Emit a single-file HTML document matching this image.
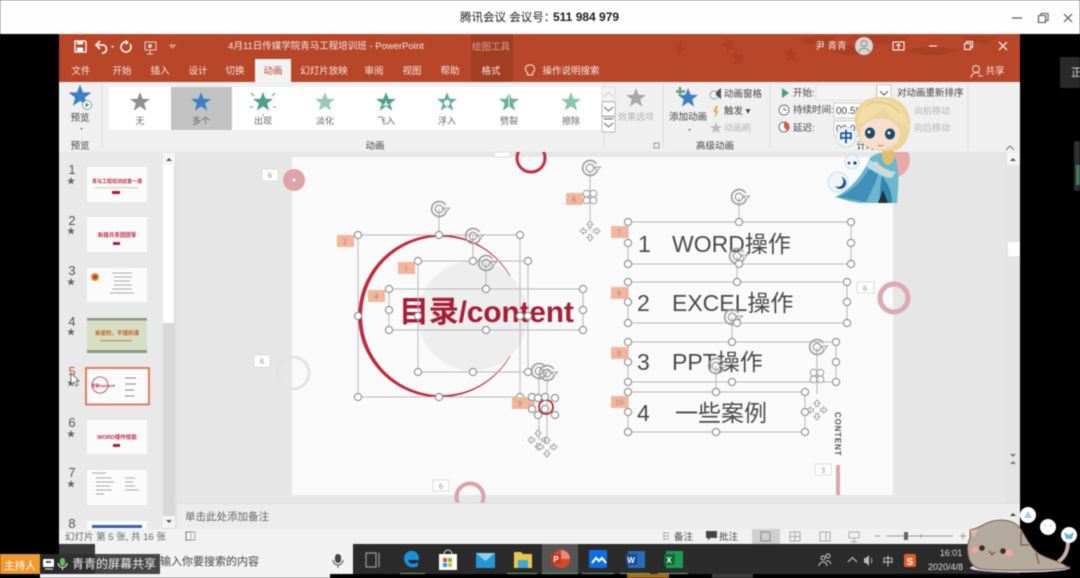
<!DOCTYPE html>
<html><head><meta charset="utf-8"><style>
html,body{margin:0;padding:0;background:#000;width:1080px;height:578px;overflow:hidden}
svg{display:block;filter:blur(.5px)}
text{font-family:"Liberation Sans","Noto Sans CJK SC",sans-serif}
.w{fill:#f6e6e0;font-size:9.5px;text-anchor:middle}
.l{fill:#666;font-size:9px;text-anchor:middle}
.d{fill:#444;font-size:9.5px}
.g{fill:#b5b5b5;font-size:9px}
.h{fill:#fff;stroke:#8d8d8d;stroke-width:1.1}
.b{fill:none;stroke:#b8b8b8;stroke-width:1}
.tag{fill:#f4b69a}
.tn{fill:#888;font-size:8px;text-anchor:middle;font-family:"Liberation Serif",serif}
.big{fill:#4a4a4a;font-size:23px}
</style></head><body>
<svg width="1080" height="578" viewBox="0 0 1080 578" xmlns="http://www.w3.org/2000/svg">
<defs>
<path id="s" d="M0-10 2.6-3.2 10-3 4.2 1.4 6.2 8.6 0 4.4-6.2 8.6-4.2 1.4-10-3-2.6-3.2Z"/>
<circle id="c" r="3.6" class="h"/>
<g id="rot" fill="none" stroke="#a0a0a0"><path d="M6.500-4A7.500 7.500 0 1 0 7 3" stroke-width="1.700"/><circle r="3.800" stroke-width="1.300"/><path d="M4-1 10.500-1 7.300 2.500Z" fill="#fff" stroke-width="1"/></g>
<g id="mv" fill="#fff" stroke="#a5a5a5" stroke-width="1"><path d="M0-10 3-6.500H1.300V-3.500H-1.300V-6.500H-3Z"/><path d="M0 10 3 6.500H1.300V3.500H-1.300V6.500H-3Z"/><path d="M-10 0-6.500-3V-1.300H-3.500V1.300H-6.500V3Z"/><path d="M10 0 6.500-3V-1.300H3.500V1.300H6.500V3Z"/></g>
<g id="fl" fill="#fff" stroke="#999" stroke-width="1"><circle cx="-3.400" cy="-3.400" r="3.400"/><circle cx="3.400" cy="-3.400" r="3.400"/><circle cx="-3.400" cy="3.400" r="3.400"/><circle cx="3.400" cy="3.400" r="3.400"/></g>
<clipPath id="ca"><rect x="59" y="152" width="947" height="351"/></clipPath>
<clipPath id="th"><rect x="59" y="152" width="104" height="377"/></clipPath>
</defs>

<rect width="1080" height="578" fill="#000"/>
<rect width="1080" height="34" fill="#fdfdfd"/>
<text x="460" y="21" font-size="11.500" fill="#222">腾讯会议 会议号：</text>
<text x="553" y="21" font-size="12" font-weight="bold" fill="#222">511 984 979</text>
<path d="M1012 18H1022" stroke="#555" stroke-width="1.200"/>
<path d="M1038.500 15.500h7v7h-7zM1041 15.500v-2h7v7h-2" fill="none" stroke="#555" stroke-width="1.100"/>
<path d="M1064 14l8 8M1072 14l-8 8" stroke="#555" stroke-width="1.200"/>

<!-- title band -->
<rect x="59" y="34" width="961" height="48" fill="#B8472A"/>
<g fill="#aa4026"><path d="M676 46l5-5 1 6 4 3-5 1-2 5-2-5Z"/><path d="M725 36l5 6 4-2-2 6 5 4-7-1-3 5-1-7-6-2 7-2Z"/><path d="M732 56l5-6 2 5 5-1-3 5 2 5-5-2-4 3 1-5Z"/><path d="M783 50l6 1 2-5 2 6 5 1-4 3 2 6-5-3-5 3 2-6Z"/><path d="M800 40q20-6 36-3l-8 8q-16 2-28-5Z"/><path d="M830 50q24-8 50-4l-18 8q-18 4-32-4Z"/><path d="M850 36h60q-10 8-30 8-18 0-30-8Z"/><path d="M905 50q24-6 55 0l-20 5q-20 2-35-5Z"/><path d="M960 36h40l-16 8q-14-1-24-8Z"/></g>
<rect x="471" y="34" width="42" height="48" fill="#A23E22"/>
<text x="491" y="50" class="w" style="fill:#dba592">绘图工具</text>
<text x="326" y="49" class="w">4月11日传媒学院青马工程培训班  -  PowerPoint</text>
<!-- QAT -->
<path d="M75 41h10l1 1v10H75Z" fill="none" stroke="#fff" stroke-width="1.300"/><rect x="77" y="41" width="6" height="3.500" fill="#fff"/><rect x="77" y="47.500" width="6" height="4" fill="#fff"/>
<path d="M98 45h5a4 4 0 1 1-1 8" fill="none" stroke="#fff" stroke-width="1.600"/><path d="M100 41l-4 4 4 4" fill="none" stroke="#fff" stroke-width="1.600"/>
<path d="M111 46l3 0-1.500 2Z" fill="#fff"/>
<path d="M126 42a5 5 0 1 0 4 2" fill="none" stroke="#fff" stroke-width="1.500"/><path d="M125 40l4 2-3 3Z" fill="#fff"/>
<rect x="145" y="42" width="11" height="8" fill="none" stroke="#e8cfc6"/><path d="M150 50v4M147 54h6" stroke="#e8cfc6"/><circle cx="150" cy="46" r="2" fill="#e8cfc6"/>
<path d="M170 45h5l-2.500 3Z" fill="none" stroke="#e8b8a8"/>
<!-- title right -->
<text x="831" y="49" class="w">尹 青青</text>
<circle cx="864" cy="46" r="9" fill="#d9d5d2"/><circle cx="864" cy="43.500" r="3" fill="none" stroke="#888"/><path d="M858.500 52a6 6 0 0 1 11 0" fill="none" stroke="#888"/>
<rect x="893" y="42" width="11" height="8" fill="none" stroke="#fff"/><path d="M898.500 44v5M896.500 46l2-2 2 2" fill="none" stroke="#fff"/>
<path d="M929 46h8" stroke="#fff"/><path d="M964.500 43.500h6v6h-6zM966.500 43.500v-2h6v6h-2" fill="none" stroke="#fff"/><path d="M999 42l8 8M1007 42l-8 8" stroke="#fff" stroke-width="1.200"/>
<!-- tabs -->
<rect x="255" y="59" width="36" height="23" fill="#f2f2f2"/>
<text x="81" y="74" class="w">文件</text><text x="122" y="74" class="w">开始</text><text x="160" y="74" class="w">插入</text><text x="198" y="74" class="w">设计</text><text x="235" y="74" class="w">切换</text>
<text x="273" y="74" class="w" style="fill:#b8492f">动画</text>
<text x="324" y="74" class="w">幻灯片放映</text><text x="374" y="74" class="w">审阅</text><text x="412" y="74" class="w">视图</text><text x="450" y="74" class="w">帮助</text><text x="491" y="74" class="w">格式</text>
<path d="M530 66a4 4 0 0 1 2.500 7.500v2.500h-5v-2.500a4 4 0 0 1 2.500-7.500Z" fill="none" stroke="#f3dcd4" stroke-width="1.100" transform="translate(0 -1)"/>
<text x="571" y="74" class="w">操作说明搜索</text>
<circle cx="976" cy="69" r="3.500" fill="none" stroke="#f3dcd4"/><path d="M971 78a5.500 5.500 0 0 1 9-4M978 76h5" fill="none" stroke="#f3dcd4"/>
<text x="995" y="74" class="w">共享</text>

<!-- ribbon -->
<rect x="59" y="82" width="961" height="70" fill="#f0f0f0"/>
<rect x="109" y="87" width="493" height="43" fill="#fff"/>
<rect x="171" y="87" width="61" height="43" fill="#c2c2c2"/>
<path d="M102 84V148M663 84V148M770 84V148M968 84V148M604 84V148" stroke="#dcdcdc"/>
<use href="#s" transform="translate(80 96) scale(1.150)" fill="#3f7fc4"/>
<circle cx="87" cy="105" r="4.500" fill="#fff" stroke="#7aa391"/><path d="M85.500 102.500l4 2.500-4 2.500Z" fill="#5a9a80"/>
<text x="80" y="121" class="d" text-anchor="middle">预览</text><path d="M80 128h3l-1.500 2Z" fill="#777"/>
<text x="80" y="149" class="d" text-anchor="middle">预览</text>
<use href="#s" transform="translate(140 102)" fill="#8f8f8f"/><text x="140" y="124" class="l">无</text>
<use href="#s" transform="translate(201 102)" fill="#3f7fc4"/><text x="201" y="124" class="l">多个</text>
<use href="#s" transform="translate(263 102)" fill="#4fa088"/><path d="M251 93l3 3M275 93l-3 3M250 107h3M276 107h-3M263 114v2" stroke="#4fa088"/><text x="263" y="124" class="l">出现</text>
<use href="#s" transform="translate(325 102)" fill="#98c9b8"/><text x="325" y="124" class="l">淡化</text>
<use href="#s" transform="translate(386 102)" fill="#4fa088"/><path d="M386 101v8M383 106l3-3 3 3" stroke="#fff" fill="none"/><text x="386" y="124" class="l">飞入</text>
<use href="#s" transform="translate(447 102)" fill="#5fae98"/><circle cx="447" cy="103" r="3" fill="#fff"/><text x="447" y="124" class="l">浮入</text>
<use href="#s" transform="translate(509 102)" fill="#68ae98"/><path d="M509 92v18" stroke="#fff"/><text x="509" y="124" class="l">劈裂</text>
<use href="#s" transform="translate(571 102)" fill="#8cc5ae"/><text x="571" y="124" class="l">擦除</text>
<rect x="602" y="87" width="13" height="14" fill="#f4f4f4" stroke="#ddd"/><path d="M604 97l4.500-5 4.500 5" fill="none" stroke="#ccc"/>
<rect x="602" y="102" width="13" height="14" fill="#fff" stroke="#bbb"/><path d="M604 107l4.500 4 4.500-4" fill="none" stroke="#666"/>
<rect x="602" y="117" width="13" height="15" fill="#fff" stroke="#bbb"/><path d="M604 119h9M604 123l4.500 4 4.500-4" fill="none" stroke="#666"/>
<text x="375" y="149" class="d" text-anchor="middle">动画</text>
<use href="#s" transform="translate(636 98)" fill="#a8a8a8"/><text x="636" y="120" class="g" text-anchor="middle">效果选项</text>
<path d="M654 143h5v5h-5z" fill="none" stroke="#999"/>
<use href="#s" transform="translate(688 98)" fill="#3f7fc4"/><path d="M680 87v9M676 91.500h9" stroke="#62a07c" stroke-width="2.400"/>
<text x="688" y="120" class="d" text-anchor="middle">添加动画</text><path d="M688 129h3l-1.500 2Z" fill="#777"/>
<text x="715" y="149" class="d" text-anchor="middle">高级动画</text>
<circle cx="714" cy="95" r="4" fill="none" stroke="#8fa7c0"/><path d="M716 92l5-4v11l-5-4Z" fill="#555"/>
<text x="724" y="97" class="d">动画窗格</text>
<path d="M716 106l-3 6h3l-2 6 5-7h-3l2-5Z" fill="#e3a23c"/><text x="724" y="114" class="d">触发 ▾</text>
<use href="#s" transform="translate(716 128) scale(.6)" fill="#bbb"/><text x="724" y="131" class="g">动画刷</text>
<path d="M782 88l7 5-7 5Z" fill="#4d9c7f"/><text x="793" y="96" class="d">开始:</text>
<rect x="816" y="85" width="60" height="15" fill="#f4f4f4" stroke="#e4e4e4"/><rect x="877" y="85" width="14" height="15" fill="#fff" stroke="#ccc"/><path d="M880 91l4 4 4-4" fill="none" stroke="#555"/>
<circle cx="784" cy="110" r="5" fill="#fff" stroke="#777"/><path d="M784 107v3h3" fill="none" stroke="#777"/><text x="793" y="113" class="d">持续时间:</text>
<rect x="834" y="103" width="40" height="15" fill="#fff" stroke="#ccc"/><text x="836" y="114" class="d" style="font-size:10px">00.50</text>
<circle cx="784" cy="127" r="5" fill="#fff" stroke="#777"/><path d="M784 127V122A5 5 0 0 1 787 131Z" fill="#d85a40"/><text x="793" y="131" class="d">延迟:</text>
<rect x="834" y="121" width="40" height="15" fill="#fff" stroke="#ccc"/><text x="836" y="132" class="d" style="font-size:10px">00.00</text>
<text x="897" y="96" class="d">对动画重新排序</text><text x="914" y="114" class="g">向前移动</text><text x="914" y="131" class="g">向后移动</text>
<text x="866" y="149" class="d" text-anchor="middle">计时</text>
<path d="M1006 150l4-4 4 4" fill="none" stroke="#777"/>

<!-- main area -->
<rect x="59" y="152" width="961" height="377" fill="#e6e6e6"/>
<rect x="59" y="152" width="117" height="377" fill="#e9e9e9"/>
<path d="M176 152V529" stroke="#dcdcdc"/>
<rect x="163" y="153" width="12" height="376" fill="#d8d8d8"/>
<rect x="163" y="153" width="12" height="12" fill="#f4f4f4"/><path d="M166 161l3-3 3 3Z" fill="#555"/>
<rect x="163" y="165" width="11" height="158" fill="#fff"/>
<rect x="163" y="516" width="12" height="12" fill="#f4f4f4"/><path d="M166 520l3 3 3-3Z" fill="#555"/>
<!-- thumbs -->
<g clip-path="url(#th)" font-size="12" fill="#555">
<text x="72" y="174" text-anchor="middle" font-size="13">1</text><text x="72" y="225" text-anchor="middle" font-size="13">2</text><text x="72" y="275" text-anchor="middle" font-size="13">3</text><text x="72" y="326" text-anchor="middle" font-size="13">4</text><text x="72" y="376" text-anchor="middle" font-size="13" fill="#c8563a">5</text><text x="72" y="427" text-anchor="middle" font-size="13">6</text><text x="72" y="477" text-anchor="middle" font-size="13">7</text><text x="72" y="528" text-anchor="middle" font-size="13">8</text>
<use href="#s" transform="translate(71 181) scale(.4)" fill="#666"/><use href="#s" transform="translate(71 231) scale(.4)" fill="#666"/><use href="#s" transform="translate(71 282) scale(.4)" fill="#666"/><use href="#s" transform="translate(71 332) scale(.4)" fill="#666"/><use href="#s" transform="translate(71 383) scale(.4)" fill="#666"/><use href="#s" transform="translate(71 434) scale(.4)" fill="#666"/><use href="#s" transform="translate(71 484) scale(.4)" fill="#666"/>
<rect x="87" y="167" width="60" height="35" fill="#fbfbfb"/><text x="117" y="183" font-size="5" font-weight="bold" fill="#c0304a" text-anchor="middle">青马工程培训班第一课</text><rect x="95" y="187" width="44" height="1.500" fill="#ddb"/><rect x="112" y="191" width="8" height="3" fill="#b0183c"/>
<rect x="87" y="217" width="60" height="35" fill="#fbfbfb"/><text x="117" y="237" font-size="5.500" font-weight="bold" fill="#c0304a" text-anchor="middle">新媒共青团团零</text><rect x="113" y="242" width="7" height="3" fill="#b0183c"/>
<rect x="87" y="268" width="60" height="34" fill="#fbfbfb"/><circle cx="95" cy="277" r="4" fill="#d9902c"/><circle cx="95" cy="277" r="2" fill="#c43a2e"/><path d="M112 273h20M114 277h18M114 281h16M114 285h18M112 289h20M110 293h24" stroke="#aaa" stroke-width="1"/>
<rect x="87" y="318" width="60" height="35" fill="#d6dfc4"/><rect x="87" y="318" width="60" height="2.500" fill="#8e9a83"/><rect x="87" y="350" width="60" height="3" fill="#8e9a83"/><text x="117" y="335" font-size="5.500" fill="#c45a2a" text-anchor="middle" font-weight="bold">亲爱的，不错的课</text><rect x="100" y="340" width="32" height="1.500" fill="#c89a70"/>
<rect x="86" y="368" width="63" height="36.500" fill="#fbfbfb" stroke="#e07050" stroke-width="1.800"/><circle cx="100" cy="385" r="8" fill="none" stroke="#c0304a" stroke-width=".8"/><text x="103" y="387" font-size="4" font-weight="bold" fill="#b0183c" text-anchor="middle">目录/content</text><path d="M125 378h11M125 384h11M125 390h9M125 396h9" stroke="#888"/>
<rect x="87" y="420" width="60" height="34" fill="#fbfbfb"/><text x="117" y="439" font-size="5.500" font-weight="bold" fill="#c0304a" text-anchor="middle">WORD操作技能</text><rect x="113" y="444" width="7" height="3" fill="#b0183c"/>
<rect x="87" y="470" width="60" height="35" fill="#fbfbfb"/><path d="M92 473h14M96 478h16M96 482h18M96 486h14M96 490h16M96 494h8M125 478h10M125 482h8M125 486h10M125 490h14" stroke="#aaa"/>
<rect x="87" y="521" width="60" height="8" fill="#fbfbfb"/><rect x="92" y="525" width="50" height="3" fill="#3a64a8"/>
</g>
<path d="M71 373l0 11 3-2 2 4 2-1-2-4 3 0Z" fill="#fff" stroke="#444" stroke-width=".7"/>
<!-- slide -->
<rect x="292" y="157" width="601" height="338" fill="#fafafa"/>
<rect x="494" y="152" width="16" height="5" fill="#fff" stroke="#ddd"/>
<g clip-path="url(#ca)">
<circle cx="531" cy="158" r="14" fill="none" stroke="#c23040" stroke-width="3"/>
<circle cx="294" cy="180" r="11" fill="#dda3a8"/><circle cx="294" cy="180" r="1.500" fill="#fff"/>
<circle cx="293" cy="373" r="16" fill="none" stroke="#e3e3e3" stroke-width="3"/>
<circle cx="470" cy="497" r="13.500" fill="none" stroke="#d9a3a8" stroke-width="4"/>
<circle cx="894" cy="298" r="14" fill="none" stroke="#dcaab0" stroke-width="5"/>
<path d="M893 152h15a18 18 0 0 1-15 26Z" fill="#e8a9a9"/>
<circle cx="473" cy="316" r="55" fill="#eeeeee"/>
<path d="M510 276A81 81 0 1 0 510 356A79.500 79.500 0 1 1 510 276Z" fill="#c12a3c" stroke="#c12a3c" stroke-width=".6"/>
<text x="399" y="322" font-size="30" font-weight="bold" fill="#a81e36" style="letter-spacing:-.2px">目录/content</text>
<text x="638" y="252" class="big">1</text><text x="672" y="252" class="big">WORD操作</text>
<text x="637" y="311" class="big">2</text><text x="672" y="311" class="big">EXCEL操作</text>
<text x="637" y="370" class="big">3</text><text x="672" y="370" class="big">PPT操作</text>
<text x="637" y="421" class="big">4</text><text x="675" y="421" class="big">一些案例</text>
<text transform="translate(835 412) rotate(90)" font-size="8" font-weight="bold" fill="#555" style="letter-spacing:.8px">CONTENT</text>
<rect x="836" y="465" width="4" height="30" fill="#d9a8ad"/>
<!-- selection boxes -->
<g class="b">
<path d="M439 209V235M473 235V261M486 263V289M739 197V222M737 257V282M732 317V342M716 366V392M817 348V394M590 172V231M539 376V440M547 378V440"/>
<rect x="358" y="235" width="162" height="162"/><rect x="418" y="261" width="110" height="111"/><rect x="389" y="289" width="194" height="41"/>
<rect x="628" y="222" width="223" height="42"/><rect x="628" y="282" width="219" height="41"/><rect x="628" y="342" width="208" height="40"/><rect x="628" y="392" width="177" height="40"/>
</g>
<g>
<use href="#rot" x="439" y="209"/><use href="#rot" x="473" y="236"/><use href="#rot" x="486" y="263"/><use href="#rot" x="539" y="371"/><use href="#rot" x="547" y="373"/><use href="#rot" x="590" y="168"/><use href="#rot" x="739" y="197"/><use href="#rot" x="737" y="256"/><use href="#rot" x="732" y="317"/><use href="#rot" x="716" y="366"/><use href="#rot" x="817" y="347"/>
</g>
<use href="#fl" x="590" y="197"/><use href="#fl" x="817" y="376"/>
<use href="#mv" x="590" y="231"/><use href="#mv" x="538" y="440"/><use href="#mv" x="547" y="447"/><use href="#mv" x="817" y="410"/>
<g>
<use href="#c" x="358" y="235"/><use href="#c" x="439" y="235"/><use href="#c" x="520" y="235"/><use href="#c" x="358" y="316"/><use href="#c" x="520" y="316"/><use href="#c" x="358" y="397"/><use href="#c" x="439" y="397"/><use href="#c" x="520" y="397"/>
<use href="#c" x="418" y="261"/><use href="#c" x="473" y="261"/><use href="#c" x="528" y="261"/><use href="#c" x="418" y="316"/><use href="#c" x="528" y="316"/><use href="#c" x="418" y="372"/><use href="#c" x="473" y="372"/><use href="#c" x="528" y="372"/>
<use href="#c" x="389" y="289"/><use href="#c" x="486" y="289"/><use href="#c" x="583" y="289"/><use href="#c" x="389" y="310"/><use href="#c" x="583" y="310"/><use href="#c" x="389" y="330"/><use href="#c" x="486" y="330"/><use href="#c" x="583" y="330"/>
<use href="#c" x="628" y="222"/><use href="#c" x="739" y="222"/><use href="#c" x="851" y="222"/><use href="#c" x="628" y="243"/><use href="#c" x="851" y="243"/><use href="#c" x="628" y="264"/><use href="#c" x="739" y="264"/><use href="#c" x="851" y="264"/>
<use href="#c" x="628" y="282"/><use href="#c" x="737" y="282"/><use href="#c" x="847" y="282"/><use href="#c" x="628" y="302"/><use href="#c" x="847" y="302"/><use href="#c" x="628" y="323"/><use href="#c" x="737" y="323"/><use href="#c" x="847" y="323"/>
<use href="#c" x="628" y="342"/><use href="#c" x="732" y="342"/><use href="#c" x="836" y="342"/><use href="#c" x="628" y="362"/><use href="#c" x="836" y="362"/><use href="#c" x="628" y="382"/><use href="#c" x="732" y="382"/><use href="#c" x="836" y="382"/>
<use href="#c" x="628" y="392"/><use href="#c" x="716" y="392"/><use href="#c" x="805" y="392"/><use href="#c" x="628" y="412"/><use href="#c" x="805" y="412"/><use href="#c" x="628" y="432"/><use href="#c" x="716" y="432"/><use href="#c" x="805" y="432"/>
</g>
<!-- tags -->
<rect x="512" y="397" width="23" height="12" class="tag"/><text x="520" y="406" class="tn">9</text>
<rect x="566" y="193" width="17" height="12" class="tag"/><text x="574" y="202" class="tn">6</text>
<rect x="337" y="235" width="17" height="12" class="tag"/><text x="345" y="244" class="tn">2</text>
<rect x="398" y="262" width="17" height="12" class="tag"/><text x="406" y="271" class="tn">1</text>
<rect x="368" y="290" width="17" height="12" class="tag"/><text x="376" y="299" class="tn">4</text>
<rect x="611" y="226" width="17" height="12" class="tag"/><text x="619" y="235" class="tn">7</text>
<rect x="611" y="287" width="17" height="12" class="tag"/><text x="619" y="296" class="tn">9</text>
<rect x="611" y="347" width="17" height="12" class="tag"/><text x="619" y="356" class="tn">8</text>
<rect x="611" y="396" width="17" height="12" class="tag"/><text x="619" y="405" class="tn">10</text>
<g fill="#fff" stroke="#ddd"><rect x="262" y="169" width="16" height="12"/><rect x="254" y="355" width="16" height="12"/><rect x="433" y="480" width="16" height="11"/><rect x="857" y="282" width="17" height="11"/><rect x="815" y="464" width="16" height="11"/></g>
<text x="270" y="178" class="tn">6</text><text x="262" y="364" class="tn">6</text><text x="441" y="489" class="tn">6</text><text x="865" y="291" class="tn">6</text><text x="823" y="473" class="tn">3</text>
<circle cx="546" cy="407" r="7" fill="none" stroke="#c12a3c" stroke-width="1.800"/>
<use href="#c" x="532" y="397"/><use href="#c" x="538" y="398"/><use href="#c" x="545" y="397"/><use href="#c" x="555" y="398"/><use href="#c" x="532" y="409"/><use href="#c" x="545" y="409"/><use href="#c" x="538" y="415"/><use href="#c" x="555" y="415"/>
</g>
<!-- right scrollbar -->
<rect x="1006" y="153" width="14" height="352" fill="#e4e4e4"/>
<rect x="1007" y="153" width="13" height="12" fill="#f6f6f6"/><path d="M1010 161l3-3 3 3Z" fill="#555"/>
<rect x="1008" y="242" width="12" height="14" fill="#fff"/>
<path d="M1010 454l3 3 3-3ZM1010 464l3-3 3 3Z" fill="#777"/>
<!-- notes -->
<path d="M176 503H1020" stroke="#dadada"/>
<rect x="177" y="504" width="843" height="25" fill="#ececec"/>
<text x="185" y="520" font-size="10.500" fill="#666">单击此处添加备注</text>
<path d="M1010 516l3-3 3 3Z" fill="#444"/>
<!-- status -->
<rect x="59" y="529" width="961" height="15" fill="#f1f1f1"/>
<text x="65" y="540" font-size="9.500" fill="#666">幻灯片 第 5 张, 共 16 张</text>
<rect x="186" y="532" width="5" height="8" fill="#fff" stroke="#777"/><rect x="191" y="532" width="4" height="8" fill="none" stroke="#aaa"/>
<path d="M663 533h6M663 536h6M663 539h6" stroke="#888" stroke-dasharray="3 1"/><text x="674" y="540" class="d">备注</text>
<path d="M706 531h11v7h-7l-2 3v-3h-2Z" fill="#444"/><text x="719" y="540" class="d">批注</text>
<rect x="752" y="529" width="28" height="15" fill="#cfcfcf"/><rect x="761" y="532" width="9" height="9" fill="none" stroke="#888"/>
<g fill="none" stroke="#aaa"><path d="M790 532h10v9h-10zM795 532v9M790 536.500h10"/><path d="M820 532h10v9h-10zM826 532v9"/><path d="M849 532h10v6h-10zM854 538v4M851 542h6"/></g>
<path d="M875 536h5M886 536h67M960 536h6M963 533v6" stroke="#999"/><rect x="904" y="532" width="4" height="8" fill="#666"/><path d="M921 534v4" stroke="#999"/>

<!-- taskbar -->
<rect x="59" y="544" width="961" height="30" fill="#2b2b2b"/>
<rect x="95" y="544" width="258" height="30" fill="#f2f2f2"/>
<rect x="59" y="544" width="36" height="30" fill="#3a3a3a"/>
<text x="160" y="565" font-size="11" fill="#444">输入你要搜索的内容</text>
<rect x="335" y="554" width="6" height="9" rx="3" fill="#444"/><path d="M333 560a5 5 0 0 0 10 0M338 565v3" fill="none" stroke="#555"/>
<path d="M366 553h10v14h-10zM379 553v14" fill="none" stroke="#999" stroke-width="1.200"/>
<rect x="542" y="544" width="36" height="30" fill="#555"/>
<path d="M404 559c0-6 5-9 9-8 5 1 6 5 6 9h-11c1 4 6 5 10 2v4c-6 3-13 1-14-7Z" fill="#1c90d8"/>
<path d="M439 554h18v16h-18Z" fill="#fbfbfb"/><path d="M444 554a4 4 0 0 1 8 0" fill="none" stroke="#ddd"/><rect x="443" y="558" width="4" height="4" fill="#e3502a"/><rect x="448" y="558" width="4" height="4" fill="#7cb83e"/><rect x="443" y="563" width="4" height="4" fill="#2f9fe0"/><rect x="448" y="563" width="4" height="4" fill="#f0b429"/>
<rect x="476" y="553" width="19" height="15" fill="#2596d1"/><path d="M476 553l9.500 8 9.500-8" fill="#8cd0ee"/>
<path d="M514 552h7l2 2h9v14h-18Z" fill="#e9c64f"/><rect x="518" y="560" width="10" height="8" fill="#3ea6d4"/>
<circle cx="561" cy="559" r="9" fill="#d4492a"/><rect x="551" y="554" width="10" height="10" fill="#c0391f"/><text x="556" y="562" font-size="8" font-weight="bold" fill="#fff" text-anchor="middle">P</text><path d="M561 550a9 9 0 0 1 9 9h-9Z" fill="#f0896a"/>
<rect x="589" y="550" width="18" height="18" rx="1.500" fill="#0f6fe0"/><path d="M592 563l4-5 3 3 3-3 4 5" fill="none" stroke="#fff" stroke-width="2"/>
<rect x="628" y="551" width="17" height="17" fill="#2b6cb8"/><rect x="626" y="554" width="11" height="11" fill="#1a4c94"/><text x="631" y="563" font-size="8" font-weight="bold" fill="#fff" text-anchor="middle">W</text>
<rect x="666" y="551" width="17" height="17" fill="#1f9a52"/><rect x="664" y="554" width="11" height="11" fill="#0e6b37"/><text x="669" y="563" font-size="8" font-weight="bold" fill="#fff" text-anchor="middle">X</text>
<g fill="#6cab6c"><rect x="400" y="573" width="25" height="1"/><rect x="507" y="573" width="30" height="1"/><rect x="542" y="573" width="36" height="1"/><rect x="582" y="573" width="32" height="1"/><rect x="620" y="573" width="30" height="1"/><rect x="658" y="573" width="30" height="1"/></g>
<circle cx="823" cy="558" r="2" fill="none" stroke="#ccc"/><circle cx="828" cy="556" r="2" fill="none" stroke="#ccc"/><path d="M819 566a4 4 0 0 1 8 0M826 561a4 4 0 0 1 5 3" fill="none" stroke="#ccc"/>
<path d="M848 562l4.500-4.500 4.500 4.500" fill="none" stroke="#ccc"/>
<path d="M864 558h2l3-3v11l-3-3h-2Z" fill="#bbb"/><path d="M871 558a4 4 0 0 1 0 5" fill="none" stroke="#bbb"/>
<text x="888" y="565" font-size="11" fill="#e4e4e4" text-anchor="middle">中</text>
<rect x="904" y="554" width="12" height="13" rx="2" fill="#e25f23"/><text x="910" y="565" font-size="10" font-weight="bold" fill="#fff" text-anchor="middle">S</text>
<text x="951" y="556" font-size="9" fill="#ddd" text-anchor="middle">16:01</text><text x="928" y="570" font-size="9" fill="#ddd">2020/4/8</text>
<!-- bottom strip -->
<rect x="40" y="574" width="290" height="4" fill="#f2f2f2"/><rect x="627" y="574" width="42" height="4" fill="#a56a1c"/><rect x="712" y="574" width="41" height="4" fill="#3c3c3c"/>
<!-- host -->
<rect x="0" y="554" width="40" height="20" fill="#ee9a33"/><text x="20" y="569" font-size="10.500" fill="#fff" text-anchor="middle">主持人</text>
<rect x="40" y="554" width="120" height="20" fill="#2d2d2d" opacity=".88"/>
<rect x="43" y="559" width="11" height="8" rx="1" fill="#fff"/><rect x="46" y="561" width="5" height="2" fill="#555"/><path d="M45 569h8" stroke="#fff"/>
<rect x="60" y="558" width="5" height="8" rx="2.500" fill="#5cc35c"/><path d="M58 563a4.500 4.500 0 0 0 9 0M62.500 567v3" fill="none" stroke="#fff"/>
<text x="72" y="568" font-size="12" fill="#eee">青青的屏幕共享</text>
<!-- side black -->
<rect x="1060" y="57" width="20" height="31" rx="2" fill="#2a2a2a"/><text x="1071" y="76" font-size="11" fill="#ddd">正</text>
<rect x="1074" y="141" width="6" height="50" rx="2" fill="#2e2e2e"/><rect x="1076" y="165" width="4" height="20" fill="#3f7d5a"/>

<!-- Elsa -->
<g>
<path d="M870 158 C878 150 892 152 896 160 C900 175 898 190 897 203 H860 C850 202 842 199 835 197 C850 190 862 176 870 158Z" fill="#6db6cf"/>
<path d="M868 170 C862 182 850 192 838 197 L866 202 C872 190 878 178 880 168Z" fill="#3f8fb8"/>
<path d="M882 176 C890 186 892 195 892 203H880C880 192 880 185 882 176Z" fill="#3186ae"/>
<path d="M878 203l5-13 5 13Z" fill="#24303c"/>
<path d="M870 160 C878 164 888 172 896 172 L892 178 C882 178 872 170 866 166Z" fill="#b4dfe8"/>
<path d="M875 162 q8 10 16 14" fill="none" stroke="#ecd3c4" stroke-width="3"/>
<ellipse cx="888" cy="155" rx="6" ry="10" fill="#e0bd70"/>
<path d="M855 122 C852 104 870 95 885 97 C900 97 912 110 910 126 C910 136 905 146 897 150 C888 152 866 152 860 140 C857 134 855 128 855 122Z" fill="#ecd59a"/>
<ellipse cx="880" cy="134" rx="20" ry="15.500" fill="#f6dfcf"/>
<path d="M859 126 C866 120 878 114 884 108 C890 118 900 124 909 128 C906 108 892 98 877 100 C863 102 856 112 859 126Z" fill="#f2dda6"/>
<path d="M866 106q8-6 18-3M884 103q10 2 16 10" fill="none" stroke="#d9bd7c" stroke-width="1"/>
<ellipse cx="870" cy="133" rx="5" ry="5.500" fill="#1d4a66"/><ellipse cx="890" cy="134" rx="5" ry="5.500" fill="#1d4a66"/>
<circle cx="869" cy="132" r="1.500" fill="#fff"/><circle cx="889" cy="133" r="1.500" fill="#fff"/>
<path d="M878 145q3 2 5 0" fill="none" stroke="#c66" stroke-width="1"/>
<!-- snowflakes -->
<g fill="#eef6fb" stroke="#bcd8ec" stroke-width=".8"><circle cx="846" cy="137" r="10"/><circle cx="852" cy="162" r="7"/><circle cx="838" cy="182" r="10"/></g>
<text x="846" y="142" font-size="14" font-weight="bold" fill="#23508f" text-anchor="middle">中</text>
<circle cx="849" cy="163" r="1.300" fill="#1f3f6a"/><circle cx="855" cy="163" r="1.600" fill="#1f3f6a"/>
<path d="M841 177a6 6 0 1 1-6 9 5 5 0 0 0 6-9Z" fill="#22508f"/>
</g>

<!-- cat -->
<path d="M1068 542 C1068 552 1064 558 1058 562" fill="none" stroke="#c4b0a4" stroke-width="4"/>
<ellipse cx="1020" cy="568" rx="50" ry="4.500" fill="#e8d6e8"/>
<path d="M970 538l0-8 7-2 6-3c12-7 29-7 37 3 6 9 10 19 18 25 8 6 26 9 30 15-18 3-68 3-88 1-8-2-11-8-12-15-1-7 0-12 2-16Z" fill="#b4a99d" stroke="#7a5d4a" stroke-width="1"/>
<path d="M970 530l8-1-4 9Z" fill="#e6b7a4"/>
<path d="M1021 532v13h8M1036 553l3 11" fill="none" stroke="#6d4a38" stroke-width="1"/>
<circle cx="982" cy="548" r="2.800" fill="#402a20"/><circle cx="1003" cy="551" r="2.800" fill="#402a20"/>
<path d="M989 551l3 4 3-3" fill="#e08a80" stroke="#402a20" stroke-width=".7"/>
<circle cx="975" cy="550" r="3" fill="#f3a6a0"/><circle cx="1009" cy="553" r="3.500" fill="#f3a6a0"/>
<circle cx="1028" cy="515" r="8" fill="#fff"/><path d="M1028 511l-4 7h8Z" fill="#a9c8ea"/>
<circle cx="1048" cy="527" r="8" fill="#fff"/><circle cx="1045" cy="526" r="1" fill="#ccc"/><circle cx="1051" cy="526" r="1" fill="#ccc"/>
<circle cx="1069" cy="535" r="8" fill="#fff"/><path d="M1064 532l5 3 5-3-2 7h-6Z" fill="#6bb0e0"/>
</svg>
</body></html>
